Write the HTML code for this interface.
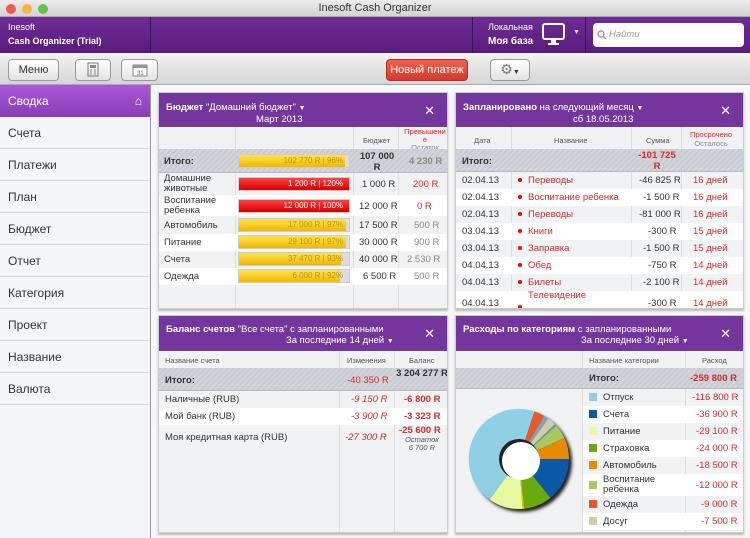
<!DOCTYPE html>
<html><head><meta charset="utf-8"><style>
*{box-sizing:border-box;margin:0;padding:0}
body{width:750px;height:538px;overflow:hidden;font-family:"Liberation Sans","DejaVu Sans",sans-serif;font-size:10px;color:#333;background:#e9e9ec;position:relative}
.a{position:absolute}
.title{left:0;top:0;width:750px;height:17px;background:linear-gradient(#ececec,#d4d4d4);text-align:center;font-size:11px;line-height:17px;color:#333;border-bottom:1px solid #aaa}
.dot{top:4px;width:10px;height:10px;border-radius:50%}
.top{left:0;top:17px;width:750px;height:36px;background:linear-gradient(#6f2b96,#571e7b)}
.tool{left:0;top:53px;width:750px;height:32px;background:linear-gradient(#f2f2f2,#d6d6d8);border-bottom:1px solid #aaa}
.btn{height:22px;top:59px;border:1px solid #9a9a9a;border-radius:4px;background:linear-gradient(#fff,#e2e2e2);text-align:center;line-height:20px;font-size:11px}
.side{left:0;top:85px;width:151px;height:453px;background:#f4f5f7;border-right:1px solid #9a9aa0}
.si{position:absolute;left:0;width:150px;height:32px;border-bottom:1px solid #dcdcdc;padding-left:8px;line-height:32px;font-size:12px;color:#333}
.main{left:151px;top:85px;width:599px;height:453px;background:#f7f7f8}
.panel{position:absolute;background:#f1f2f4;border:1px solid #ccc;box-shadow:0 2px 2px #bbb;overflow:hidden}
.ph{position:absolute;left:0;top:0;right:0;background:#73369c;color:#fff;font-size:9.5px;line-height:11px}
.x{position:absolute;right:12px;top:10px;font-weight:bold;font-size:13px;color:#fff}
.row{position:absolute;left:0;right:0;font-size:9.5px}
.row span{position:absolute;top:0}
.tot{background:repeating-linear-gradient(135deg,#c8cbd2 0 2px,#d2d5db 2px 4px);border-bottom:1px solid #bbb;font-weight:bold}
.wh{background:#fff}
.hd{font-size:7.5px;color:#555}
.red{color:#d42a2a}
.bar{position:absolute;left:79px;width:112px;height:14px;background:#ddd;border:1px solid #ccc}
.bar i{position:absolute;left:0;top:0;bottom:0;background:linear-gradient(#ffe34d,#f0b800)}
.bar.r i{background:linear-gradient(#ff4040,#d30000)}
.bar b{position:absolute;right:6px;top:1px;font-weight:normal;font-size:8px;color:#b8951a}
.bar.r b{color:#fff}
.vl{position:absolute;top:0;bottom:0;width:1px;background:#ddd}
.bd{display:inline-block;width:4px;height:4px;border-radius:50%;background:#e00;margin-right:6px;vertical-align:middle}
.sq{display:inline-block;width:8px;height:8px;margin-right:6px;vertical-align:-1px}
</style></head><body>
<div class="a title">Inesoft Cash Organizer</div>
<div class="a dot" style="left:6px;background:#ee5b55"></div>
<div class="a dot" style="left:22px;background:#f4b739"></div>
<div class="a dot" style="left:38px;background:#5fc64a"></div>

<div class="a top"></div>
<div class="a" style="left:150px;top:17px;width:1px;height:36px;background:#3d1256"></div>
<div class="a" style="left:472px;top:17px;width:1px;height:36px;background:#3d1256"></div>
<div class="a" style="left:585px;top:17px;width:1px;height:36px;background:#3d1256"></div>
<div class="a" style="left:8px;top:22px;color:#fff;font-size:9px">Inesoft</div>
<div class="a" style="left:8px;top:36px;color:#fff;font-size:9px;font-weight:bold">Cash Organizer (Trial)</div>
<div class="a" style="left:488px;top:22px;color:#fff;font-size:9px">Локальная</div>
<div class="a" style="left:488px;top:36px;color:#fff;font-size:10px;font-weight:bold">Моя база</div>
<svg class="a" style="left:541px;top:22px" width="26" height="26"><rect x="2" y="2" width="21" height="15" rx="2" fill="none" stroke="#fff" stroke-width="2"/><rect x="10" y="17" width="5" height="4" fill="#fff"/><rect x="7" y="21" width="11" height="2" fill="#fff"/></svg>
<div class="a" style="left:573px;top:29px;color:#ddd;font-size:7px">▼</div>
<div class="a" style="left:593px;top:23px;width:151px;height:24px;background:#fff;border-radius:4px;font-size:9.5px;color:#999;font-style:italic;padding-left:16px;line-height:24px">Найти</div>
<svg class="a" style="left:597px;top:30px" width="10" height="10"><circle cx="4" cy="4" r="3" fill="none" stroke="#888" stroke-width="1.2"/><line x1="6" y1="6" x2="9" y2="9" stroke="#888" stroke-width="1.2"/></svg>

<div class="a tool"></div>
<div class="a btn" style="left:8px;width:51px">Меню</div>
<div class="a btn" style="left:75px;width:36px"><svg width="12" height="15" style="margin-top:2px"><rect x="1" y="1" width="10" height="13" fill="none" stroke="#777"/><rect x="3" y="3" width="6" height="3" fill="#888"/><path d="M3 8h2M7 8h2M3 10h2M7 10h2M3 12h2M7 12h2" stroke="#888"/></svg></div>
<div class="a btn" style="left:121px;width:37px"><svg width="16" height="14" style="margin-top:3px"><rect x="1" y="2" width="14" height="11" fill="#f5f5f5" stroke="#888"/><rect x="1" y="2" width="14" height="3" fill="#999"/><text x="5" y="12" font-size="6" fill="#777">31</text></svg></div>
<div class="a btn" style="left:386px;width:82px;background:linear-gradient(#ef6050,#d63a2c);border-color:#b83025;color:#fff">Новый платеж</div>
<div class="a btn" style="left:490px;width:40px;font-size:14px;color:#777;line-height:19px">⚙<span style="font-size:7px;color:#333">▼</span></div>

<div class="a side">
<div class="si" style="top:0;background:linear-gradient(#a85ad6,#8a3db8);color:#fff;border:none">Сводка<span style="position:absolute;right:8px;top:0;font-size:12px">⌂</span></div>
<div class="si" style="top:32px">Счета</div>
<div class="si" style="top:64px">Платежи</div>
<div class="si" style="top:96px">План</div>
<div class="si" style="top:128px">Бюджет</div>
<div class="si" style="top:160px">Отчет</div>
<div class="si" style="top:192px">Категория</div>
<div class="si" style="top:224px">Проект</div>
<div class="si" style="top:256px">Название</div>
<div class="si" style="top:288px">Валюта</div>
</div>
<div class="a main"></div>

<!-- Budget panel -->
<div class="panel" style="left:158px;top:92px;width:290px;height:217px">
<div class="ph" style="height:34px;padding:9px 0 0 7px"><b>Бюджет</b> "Домашний бюджет" <span style="font-size:7px">▼</span><br><span style="padding-left:90px">Март 2013</span></div>
<div class="x">✕</div>
<div class="vl" style="left:76px;top:34px"></div><div class="vl" style="left:194px;top:34px"></div><div class="vl" style="left:239px;top:34px"></div>
<div class="row hd" style="top:34px;height:22px"><span style="left:204px;top:9px">Бюджет</span><span class="red" style="left:242px;top:1px;width:48px;text-align:center;line-height:8px">Превышени<br>е<br><span style="position:static;color:#888">Остаток</span></span></div>
<div class="row tot" style="top:56px;height:24px"><span style="left:5px;top:7px">Итого:</span><div class="bar" style="top:5px"><i style="width:96%"></i><b>102 770 R | 96%</b></div><span style="left:198px;top:2px;width:40px;text-align:center;line-height:11px">107 000 R</span><span style="left:250px;top:7px;color:#888">4 230 R</span></div>
<div class="row" style="top:80px;height:22px"><span style="left:5px;top:1px;line-height:10px">Домашние<br>животные</span><div class="bar r" style="top:4px"><i style="width:100%"></i><b>1 200 R | 120%</b></div><span style="left:203px;top:6px">1 000 R</span><span class="red" style="left:254px;top:6px">200 R</span></div>
<div class="row wh" style="top:102px;height:21px"><span style="left:5px;top:1px;line-height:10px">Воспитание<br>ребенка</span><div class="bar r" style="top:4px"><i style="width:100%"></i><b>12 000 R | 100%</b></div><span style="left:200px;top:6px">12 000 R</span><span class="red" style="left:258px;top:6px">0 R</span></div>
<div class="row" style="top:123px;height:18px"><span style="left:5px;top:4px">Автомобиль</span><div class="bar" style="top:2px"><i style="width:97%"></i><b>17 000 R | 97%</b></div><span style="left:200px;top:4px">17 500 R</span><span style="left:255px;top:4px;color:#888">500 R</span></div>
<div class="row wh" style="top:141px;height:17px"><span style="left:5px;top:3px">Питание</span><div class="bar" style="top:1px"><i style="width:97%"></i><b>29 100 R | 97%</b></div><span style="left:200px;top:3px">30 000 R</span><span style="left:255px;top:3px;color:#888">900 R</span></div>
<div class="row" style="top:158px;height:17px"><span style="left:5px;top:3px">Счета</span><div class="bar" style="top:1px"><i style="width:93%"></i><b>37 470 R | 93%</b></div><span style="left:200px;top:3px">40 000 R</span><span style="left:248px;top:3px;color:#888">2 530 R</span></div>
<div class="row wh" style="top:175px;height:17px"><span style="left:5px;top:3px">Одежда</span><div class="bar" style="top:1px"><i style="width:92%"></i><b>6 000 R | 92%</b></div><span style="left:204px;top:3px">6 500 R</span><span style="left:255px;top:3px;color:#888">500 R</span></div>
</div>

<!-- Planned panel -->
<div class="panel" style="left:455px;top:92px;width:289px;height:217px">
<div class="ph" style="height:34px;padding:9px 0 0 7px"><b>Запланировано</b> на следующий месяц <span style="font-size:7px">▼</span><br><span style="padding-left:110px">сб 18.05.2013</span></div>
<div class="x">✕</div>
<div class="vl" style="left:55px;top:34px"></div><div class="vl" style="left:175px;top:34px"></div><div class="vl" style="left:225px;top:34px"></div>
<div class="row hd" style="top:34px;height:22px"><span style="left:18px;top:9px">Дата</span><span style="left:98px;top:9px">Название</span><span style="left:190px;top:9px">Сумма</span><span class="red" style="left:234px;top:3px;text-align:center;line-height:9px">Просрочено<br><span style="position:static;color:#888">Осталось</span></span></div>
<div class="row tot" style="top:56px;height:23px"><span style="left:6px;top:7px">Итого:</span><span class="red" style="left:180px;top:1px;width:42px;text-align:center;line-height:11px">-101 725 R</span></div>
<div class="row" style="top:79px;height:17px"><span style="left:6px;top:3px">02.04.13</span><span class="red" style="left:62px;top:3px"><i class="bd"></i>Переводы</span><span style="left:183px;top:3px">-46 825 R</span><span class="red" style="left:237px;top:3px">16 дней</span></div>
<div class="row wh" style="top:96px;height:17px"><span style="left:6px;top:3px">02.04.13</span><span class="red" style="left:62px;top:3px"><i class="bd"></i>Воспитание ребенка</span><span style="left:187px;top:3px">-1 500 R</span><span class="red" style="left:237px;top:3px">16 дней</span></div>
<div class="row" style="top:113px;height:17px"><span style="left:6px;top:3px">02.04.13</span><span class="red" style="left:62px;top:3px"><i class="bd"></i>Переводы</span><span style="left:183px;top:3px">-81 000 R</span><span class="red" style="left:237px;top:3px">16 дней</span></div>
<div class="row wh" style="top:130px;height:17px"><span style="left:6px;top:3px">03.04.13</span><span class="red" style="left:62px;top:3px"><i class="bd"></i>Книги</span><span style="left:192px;top:3px">-300 R</span><span class="red" style="left:237px;top:3px">15 дней</span></div>
<div class="row" style="top:147px;height:17px"><span style="left:6px;top:3px">03.04.13</span><span class="red" style="left:62px;top:3px"><i class="bd"></i>Заправка</span><span style="left:187px;top:3px">-1 500 R</span><span class="red" style="left:237px;top:3px">15 дней</span></div>
<div class="row wh" style="top:164px;height:17px"><span style="left:6px;top:3px">04.04.13</span><span class="red" style="left:62px;top:3px"><i class="bd"></i>Обед</span><span style="left:192px;top:3px">-750 R</span><span class="red" style="left:237px;top:3px">14 дней</span></div>
<div class="row" style="top:181px;height:17px"><span style="left:6px;top:3px">04.04.13</span><span class="red" style="left:62px;top:3px"><i class="bd"></i>Билеты</span><span style="left:187px;top:3px">-2 100 R</span><span class="red" style="left:237px;top:3px">14 дней</span></div>
<div class="row wh" style="top:198px;height:19px"><span style="left:6px;top:7px">04.04.13</span><span class="red" style="left:62px;top:0px"><i class="bd" style="margin-top:14px"></i></span><span class="red" style="left:72px;top:-1px">Телевидение</span><span style="left:192px;top:7px">-300 R</span><span class="red" style="left:237px;top:7px">14 дней</span></div>
</div>

<!-- Balance panel -->
<div class="panel" style="left:158px;top:315px;width:290px;height:218px">
<div class="ph" style="height:35px;padding:8px 0 0 7px"><b>Баланс счетов</b> "Все счета" с запланированными<br><span style="padding-left:120px">За последние 14 дней</span> <span style="font-size:7px">▼</span></div>
<div class="x">✕</div>
<div class="vl" style="left:180px;top:35px"></div><div class="vl" style="left:235px;top:35px"></div>
<div class="row hd" style="top:35px;height:17px"><span style="left:6px;top:5px">Название счета</span><span style="left:188px;top:5px">Изменения</span><span style="left:250px;top:5px">Баланс</span></div>
<div class="row tot" style="top:52px;height:23px"><span style="left:6px;top:7px">Итого:</span><span class="red" style="left:188px;top:7px;font-weight:normal">-40 350 R</span><span style="left:237px;top:0;width:52px;text-align:center;line-height:11px">3 204 277 R</span></div>
<div class="row" style="top:75px;height:17px"><span style="left:6px;top:3px">Наличные (RUB)</span><span class="red" style="left:192px;top:3px;font-style:italic">-9 150 R</span><span class="red" style="left:245px;top:3px;font-weight:bold">-6 800 R</span></div>
<div class="row wh" style="top:92px;height:17px"><span style="left:6px;top:3px">Мой банк (RUB)</span><span class="red" style="left:192px;top:3px;font-style:italic">-3 900 R</span><span class="red" style="left:245px;top:3px;font-weight:bold">-3 323 R</span></div>
<div class="row" style="top:109px;height:30px"><span style="left:6px;top:7px">Моя кредитная карта (RUB)</span><span class="red" style="left:186px;top:7px;font-style:italic">-27 300 R</span><span class="red" style="left:240px;top:0;font-weight:bold">-25 600 R</span><span style="left:246px;top:11px;font-size:7.5px;font-style:italic;text-align:center;line-height:8px;color:#555">Остаток<br>6 700 R</span></div>
</div>

<!-- Categories panel -->
<div class="panel" style="left:455px;top:315px;width:289px;height:218px">
<div class="ph" style="height:35px;padding:8px 0 0 7px"><b>Расходы по категориям</b> с запланированными<br><span style="padding-left:118px">За последние 30 дней</span> <span style="font-size:7px">▼</span></div>
<div class="x">✕</div>
<div class="vl" style="left:126px;top:35px"></div><div class="vl" style="left:229px;top:35px"></div>
<div class="row hd" style="top:35px;height:17px"><span style="left:133px;top:5px">Название категории</span><span style="left:246px;top:5px">Расход</span></div>
<div class="row tot" style="top:52px;height:21px"><span style="left:133px;top:5px">Итого:</span><span class="red" style="left:234px;top:5px">-259 800 R</span></div>
<div class="a" style="left:127px;top:73px;width:162px;height:145px">
<div class="row" style="top:0;height:17px"><span style="left:6px;top:3px"><i class="sq" style="background:#8fd0e4"></i>Отпуск</span><span class="red" style="left:109px;top:3px">-116 800 R</span></div>
<div class="row wh" style="top:17px;height:17px"><span style="left:6px;top:3px"><i class="sq" style="background:#0a5aa8"></i>Счета</span><span class="red" style="left:113px;top:3px">-36 900 R</span></div>
<div class="row" style="top:34px;height:17px"><span style="left:6px;top:3px"><i class="sq" style="background:#e6f8a0"></i>Питание</span><span class="red" style="left:113px;top:3px">-29 100 R</span></div>
<div class="row wh" style="top:51px;height:17px"><span style="left:6px;top:3px"><i class="sq" style="background:#6aaa10"></i>Страховка</span><span class="red" style="left:113px;top:3px">-24 000 R</span></div>
<div class="row" style="top:68px;height:17px"><span style="left:6px;top:3px"><i class="sq" style="background:#e88a00"></i>Автомобиль</span><span class="red" style="left:113px;top:3px">-18 500 R</span></div>
<div class="row wh" style="top:85px;height:22px"><span style="left:6px;top:1px;line-height:10px"><i class="sq" style="background:#a8c860;margin-top:6px;float:left"></i>Воспитание<br>ребенка</span><span class="red" style="left:113px;top:6px">-12 000 R</span></div>
<div class="row" style="top:107px;height:17px"><span style="left:6px;top:3px"><i class="sq" style="background:#e85a2a"></i>Одежда</span><span class="red" style="left:118px;top:3px">-9 000 R</span></div>
<div class="row wh" style="top:124px;height:17px"><span style="left:6px;top:3px"><i class="sq" style="background:#d0ceaa"></i>Досуг</span><span class="red" style="left:118px;top:3px">-7 500 R</span></div>
</div>
<svg class="a" style="left:3px;top:83px" width="124" height="124">
<defs><filter id="s"><feGaussianBlur stdDeviation="1.5"/></filter></defs>
<circle cx="63" cy="63" r="50" fill="#222" filter="url(#s)"/>
<g>
<path d="M60 60L110 60A50 50 0 0 1 91.5 98.9Z" fill="#0a5aa8"/>
<path d="M60 60L91.5 98.9A50 50 0 0 1 65.2 109.7Z" fill="#6aaa10"/>
<path d="M60 60L65.2 109.7A50 50 0 0 1 63.5 109.9Z" fill="#e0d000"/>
<path d="M60 60L63.5 109.9A50 50 0 0 1 30.6 100.5Z" fill="#e6f8a0"/>
<path d="M60 60L30.6 100.5A50 50 0 0 1 75.5 12.4Z" fill="#8fd0e4"/>
<path d="M60 60L75.5 12.4A50 50 0 0 1 85 16.7Z" fill="#e85a2a"/>
<path d="M60 60L85 16.7A50 50 0 0 1 89.4 19.5Z" fill="#8aa0b0"/>
<path d="M60 60L89.4 19.5A50 50 0 0 1 96 25.3Z" fill="#d0ceaa"/>
<path d="M60 60L96 25.3A50 50 0 0 1 97.2 26.6Z" fill="#40a8c0"/>
<path d="M60 60L97.2 26.6A50 50 0 0 1 105.3 38.9Z" fill="#a8c860"/>
<path d="M60 60L105.3 38.9A50 50 0 0 1 110 60Z" fill="#e88a00"/>
</g>
<circle cx="60" cy="60" r="20" fill="#222"/>
<circle cx="62" cy="62" r="19" fill="#fff"/>
</svg>
</div>
</body></html>
